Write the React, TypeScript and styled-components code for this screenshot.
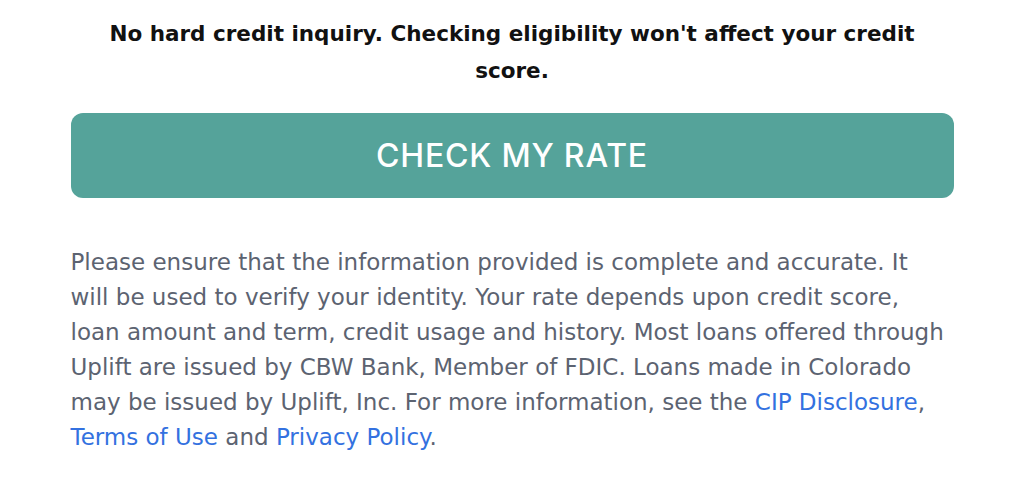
import styled, { createGlobalStyle } from 'styled-components'

const GlobalStyle = createGlobalStyle`
  html, body {
    margin: 0;
    padding: 0;
    background: #fff;
  }
  body {
    font-family: 'DejaVu Sans', Inter, sans-serif;
    -webkit-font-smoothing: antialiased;
  }
`

const Panel = styled.section`
  width: 883px;
  margin: 0 auto;
  padding-top: 15px;
  display: flex;
  flex-direction: column;
`

const Notice = styled.p`
  margin: 0;
  text-align: center;
  font-size: 21.5px;
  line-height: 37px;
  font-weight: 700;
  color: #111;
  padding: 0 30px;
`

const RateButton = styled.button`
  margin-top: 24px;
  height: 85px;
  width: 100%;
  border: none;
  border-radius: 12px;
  background: #55a39a;
  color: #fff;
  font-family: Inter, sans-serif;
  font-size: 32px;
  font-weight: 500;
  letter-spacing: 0.8px;
  cursor: pointer;
`

const Disclosure = styled.p`
  margin: 47px 0 0;
  padding-right: 6px;
  font-size: 23px;
  line-height: 35px;
  color: #5c6371;
`

const Link = styled.a`
  color: #3371e0;
  text-decoration: none;
`

export default function App() {
  return (
    <>
      <GlobalStyle />
      <Panel>
        <Notice>
          No hard credit inquiry. Checking eligibility won't affect your credit score.
        </Notice>
        <RateButton type="button">CHECK MY RATE</RateButton>
        <Disclosure>
          Please ensure that the information provided is complete and accurate. It will be
          used to verify your identity. Your rate depends upon credit score, loan amount and
          term, credit usage and history. Most loans offered through Uplift are issued by CBW
          Bank, Member of FDIC. Loans made in Colorado may be issued by Uplift, Inc. For more
          information, see the <Link href="#">CIP Disclosure</Link>,{' '}
          <Link href="#">Terms of Use</Link> and <Link href="#">Privacy Policy</Link>.
        </Disclosure>
      </Panel>
    </>
  )
}
